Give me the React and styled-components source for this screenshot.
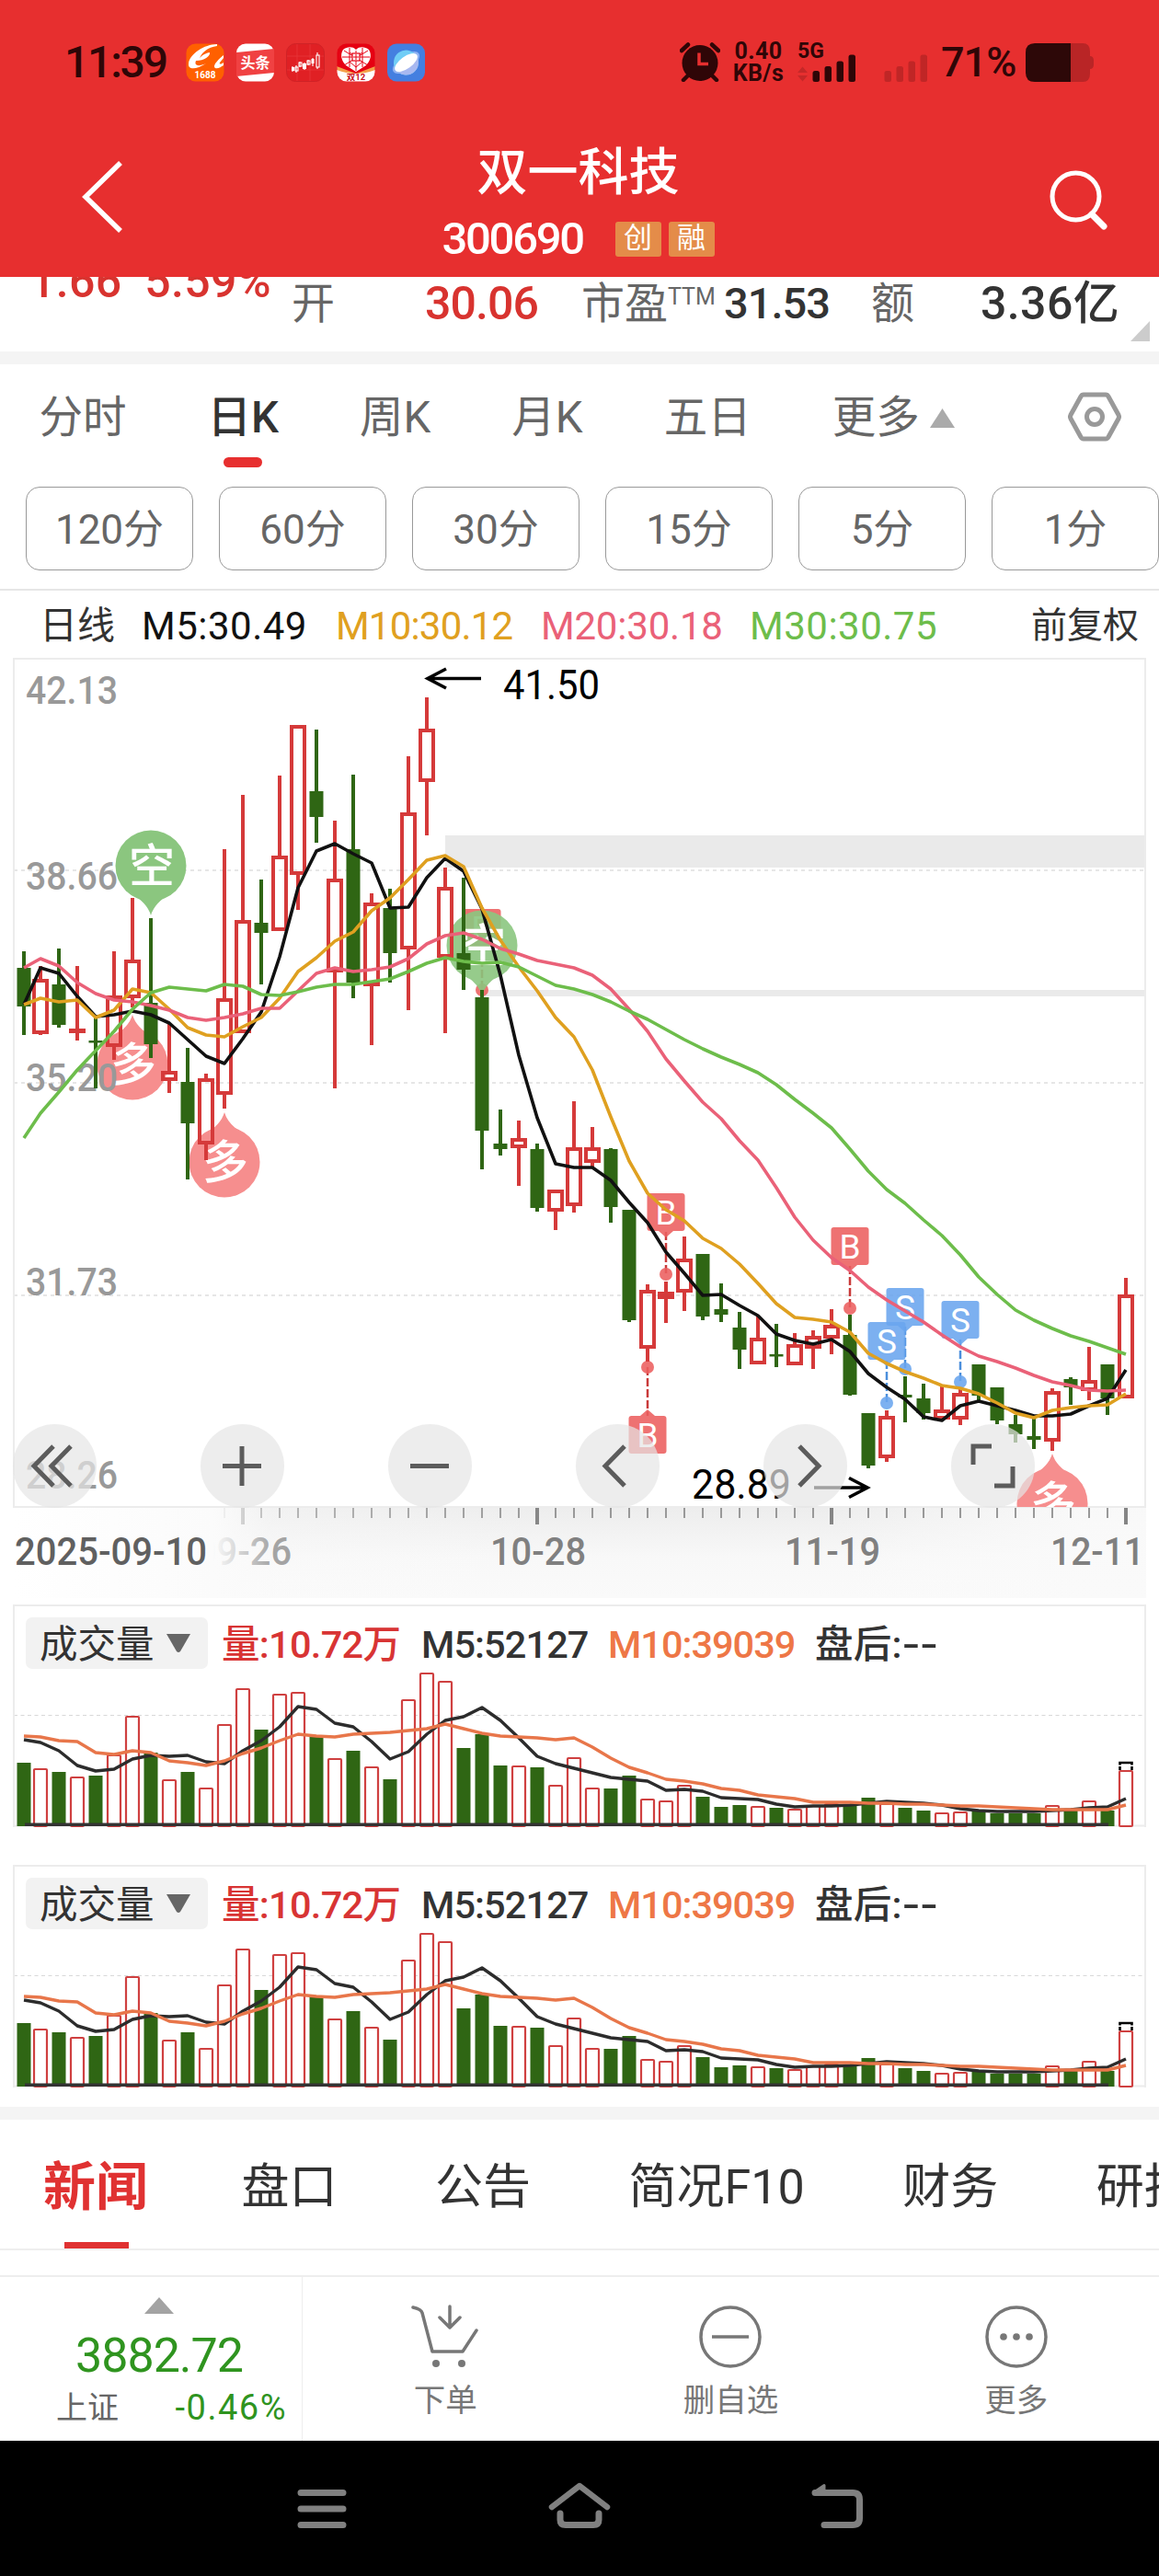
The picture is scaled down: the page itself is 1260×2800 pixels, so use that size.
import React from "react";
import styled, { createGlobalStyle } from "styled-components";

const RED = "#e72f2f";
const UP = "#d53a3a";
const DOWN = "#2f6614";

// [up, high, bodyTop, bodyBottom, low]
const candles = [
  [0, 1034, 1052, 1094, 1125], [1, 1050, 1064, 1124, 1125], [0, 1031, 1070, 1114, 1117],
  [1, 1050, 1118, 1123, 1131], [0, 1105, 1131, 1133, 1183], [1, 1034, 1082, 1138, 1152],
  [1, 976, 1043, 1085, 1095], [0, 998, 1090, 1135, 1150], [1, 1112, 1164, 1175, 1188],
  [0, 1139, 1176, 1221, 1282], [1, 1167, 1172, 1244, 1261], [1, 923, 1085, 1190, 1205],
  [1, 864, 1000, 1123, 1123], [0, 956, 1003, 1014, 1070], [1, 843, 930, 1012, 1012],
  [1, 788, 788, 951, 989], [0, 793, 860, 888, 916], [1, 892, 955, 1057, 1183],
  [0, 842, 923, 1068, 1085], [1, 971, 981, 1072, 1136], [0, 966, 987, 1036, 1068],
  [1, 822, 883, 1032, 1098], [1, 758, 792, 850, 908], [1, 943, 964, 1041, 1123],
  [0, 954, 1036, 1054, 1076], [0, 1076, 1084, 1229, 1271], [0, 1206, 1243, 1249, 1256],
  [1, 1218, 1237, 1248, 1289], [0, 1243, 1249, 1313, 1317], [1, 1293, 1293, 1317, 1337],
  [1, 1197, 1247, 1311, 1318], [1, 1225, 1247, 1264, 1269], [0, 1248, 1249, 1312, 1329],
  [0, 1315, 1315, 1435, 1437], [1, 1396, 1402, 1466, 1480], [1, 1393, 1404, 1412, 1438],
  [1, 1344, 1368, 1405, 1425], [0, 1363, 1363, 1431, 1435], [0, 1395, 1423, 1429, 1437],
  [0, 1426, 1443, 1467, 1488], [1, 1430, 1454, 1483, 1483], [0, 1439, 1472, 1474, 1486],
  [1, 1449, 1461, 1484, 1484], [1, 1446, 1452, 1466, 1488], [1, 1423, 1440, 1455, 1472],
  [0, 1429, 1451, 1516, 1517], [0, 1536, 1536, 1593, 1596], [1, 1533, 1539, 1585, 1589],
  [0, 1496, 1516, 1519, 1546], [0, 1504, 1520, 1536, 1543], [1, 1506, 1532, 1543, 1543],
  [1, 1510, 1514, 1543, 1549], [0, 1483, 1483, 1517, 1523], [0, 1508, 1508, 1544, 1548],
  [0, 1538, 1548, 1559, 1568], [0, 1542, 1561, 1565, 1575], [1, 1509, 1512, 1567, 1577],
  [0, 1497, 1499, 1508, 1527], [1, 1464, 1500, 1512, 1522], [0, 1483, 1483, 1520, 1538],
  [1, 1389, 1407, 1520, 1520],
];

const ma5 = [1092, 1052, 1058, 1083, 1105, 1103, 1099, 1103, 1112, 1130, 1148, 1156, 1129, 1100, 1040, 965, 925, 917, 928, 938, 987, 986, 954, 933, 947, 988, 1060, 1147, 1215, 1265, 1269, 1269, 1283, 1307, 1329, 1361, 1384, 1408, 1407, 1419, 1430, 1450, 1457, 1461, 1456, 1469, 1493, 1508, 1521, 1540, 1544, 1528, 1523, 1528, 1533, 1539, 1539, 1537, 1528, 1520, 1489];
const ma10 = [1092, 1085, 1089, 1087, 1106, 1098, 1075, 1079, 1097, 1117, 1125, 1127, 1116, 1106, 1085, 1056, 1041, 1023, 1013, 990, 976, 956, 935, 930, 942, 987, 1022, 1051, 1077, 1106, 1127, 1163, 1214, 1262, 1297, 1315, 1327, 1346, 1357, 1374, 1395, 1417, 1432, 1434, 1437, 1448, 1471, 1482, 1491, 1498, 1506, 1509, 1515, 1525, 1536, 1541, 1533, 1530, 1528, 1527, 1515];
const ma20 = [1052, 1042, 1050, 1068, 1080, 1087, 1089, 1093, 1098, 1106, 1109, 1106, 1102, 1096, 1096, 1077, 1058, 1052, 1056, 1054, 1051, 1042, 1026, 1017, 1014, 1021, 1031, 1037, 1044, 1048, 1052, 1060, 1075, 1097, 1121, 1151, 1175, 1198, 1216, 1240, 1261, 1291, 1323, 1348, 1367, 1381, 1399, 1413, 1425, 1437, 1451, 1464, 1474, 1480, 1487, 1495, 1502, 1506, 1511, 1512, 1511];
const ma30 = [1237, 1210, 1187, 1163, 1142, 1121, 1097, 1079, 1073, 1075, 1077, 1070, 1072, 1081, 1082, 1078, 1073, 1070, 1070, 1067, 1064, 1056, 1047, 1041, 1045, 1047, 1046, 1051, 1061, 1071, 1075, 1081, 1089, 1099, 1108, 1119, 1130, 1140, 1149, 1157, 1166, 1179, 1195, 1210, 1226, 1249, 1273, 1293, 1308, 1326, 1343, 1364, 1388, 1407, 1424, 1435, 1444, 1452, 1458, 1465, 1472];

const volumes = [1916, 1922, 1926, 1931, 1930, 1907, 1865, 1905, 1934, 1926, 1943, 1874, 1835, 1880, 1841, 1839, 1888, 1911, 1903, 1920, 1934, 1847, 1818, 1827, 1900, 1885, 1919, 1919, 1921, 1940, 1910, 1943, 1944, 1930, 1955, 1957, 1940, 1953, 1964, 1962, 1963, 1965, 1966, 1962, 1960, 1963, 1954, 1960, 1965, 1968, 1970, 1969, 1969, 1971, 1971, 1971, 1962, 1968, 1957, 1968, 1924];
const vma5 = [1891, 1894, 1903, 1919, 1925, 1923, 1912, 1908, 1909, 1908, 1915, 1917, 1903, 1892, 1877, 1855, 1858, 1873, 1877, 1893, 1912, 1904, 1885, 1870, 1866, 1856, 1870, 1889, 1909, 1917, 1922, 1927, 1932, 1934, 1936, 1946, 1945, 1947, 1954, 1955, 1956, 1961, 1964, 1963, 1963, 1962, 1960, 1958, 1959, 1960, 1962, 1966, 1968, 1969, 1969, 1969, 1968, 1967, 1965, 1964, 1955];
const vma10 = [1887, 1888, 1892, 1893, 1905, 1907, 1903, 1905, 1914, 1916, 1919, 1914, 1906, 1900, 1892, 1885, 1887, 1888, 1885, 1884, 1883, 1881, 1879, 1874, 1879, 1884, 1887, 1888, 1889, 1891, 1889, 1899, 1911, 1921, 1927, 1934, 1936, 1939, 1944, 1946, 1951, 1953, 1955, 1959, 1959, 1959, 1960, 1960, 1961, 1961, 1962, 1963, 1963, 1964, 1965, 1966, 1967, 1967, 1967, 1967, 1962];

const cx = (i) => (i === 0 ? 26 : 24 + 20 * i);
const toPoints = (list) => list.map((y, i) => `${cx(i)},${y}`).join(" ");

const markers = [
  { t: "B", x: 524, box: 988, dot: 1076 },
  { t: "B", x: 724, box: 1297, dot: 1385 },
  { t: "B", x: 924, box: 1334, dot: 1422 },
  { t: "B", x: 704, box: 1539, dot: 1486 },
  { t: "S", x: 984, box: 1400, dot: 1488 },
  { t: "S", x: 964, box: 1437, dot: 1525 },
  { t: "S", x: 1044, box: 1414, dot: 1502 },
];

const pins = [
  { t: "多", x: 144, y: 1157, up: true },
  { t: "多", x: 244, y: 1263, up: true },
  { t: "多", x: 1144, y: 1634, up: true },
  { t: "空", x: 164, y: 941 },
  { t: "空", x: 524, y: 1028 },
];

const controls = [
  "M44 24L23 45.500L44 67M63 24L42 45.500L63 67",
  "M24 45.500H66M45 24V67",
  "M24 45.500H66",
  "M53 24L32 45.500L53 67",
  "M39 24L60 45.500L39 67",
  "M24 44V24H44M67 46V67H47",
];

const Marker = ({ t, x, box, dot }) => {
  const fill = t === "B" ? "#ec5f5f" : "#6aa6ef";
  const line = t === "B" ? "#c93a3a" : "#4b8fdc";
  const below = dot < box;
  const start = below ? dot : box + 42;
  const end = below ? box : dot;
  const tip = below
    ? `${x - 8},${box} ${x + 8},${box} ${x},${box - 7}`
    : `${x - 8},${box + 41} ${x + 8},${box + 41} ${x},${box + 48}`;
  return (
    <g>
      <line x1={x} x2={x} y1={start} y2={end} stroke={line} strokeWidth="2.500" strokeDasharray="9 3" />
      <g fill={fill} opacity="0.88">
        <circle cx={x} cy={dot} r="7" />
        <rect x={x - 20.5} y={box} width="41" height="41" rx="3" />
        <polygon points={tip} />
      </g>
      <ChartText x={x} y={box + 34} fill="#fff" size="37" anchor="middle">{t}</ChartText>
    </g>
  );
};

const Pin = ({ t, x, y, up }) => {
  const s = up ? -1 : 1;
  return (
    <g>
      <g fill={up ? "#f68e8e" : "#8bc67f"} opacity={x === 524 ? 0.9 : 1}>
        <circle cx={x} cy={y} r="38.5" />
        <path d={`M${x - 22} ${y + s * 30} Q${x - 4} ${y + s * 40} ${x} ${y + s * 54} Q${x + 4} ${y + s * 40} ${x + 22} ${y + s * 30} Z`} />
      </g>
      <ChartText x={x + 1} y={y + 18} fill="#fff" size="50" weight="500" anchor="middle">{t}</ChartText>
    </g>
  );
};

const Candle = ({ i, d }) => {
  const [up, high, top, bottom, low] = d;
  const x = cx(i);
  if (!up) {
    return (
      <g fill={DOWN}>
        <rect x={x - 2} y={high} width="4" height={low - high} />
        <rect x={x - 7.5} y={top} width="15" height={Math.max(bottom - top, 2.5)} />
      </g>
    );
  }
  return (
    <g>
      <rect x={x - 2} y={high} width="4" height={Math.max(top - high, 0)} fill={UP} />
      <rect x={x - 2} y={bottom} width="4" height={low - bottom} fill={UP} />
      <rect x={x - 7} y={top + 2} width="14" height={Math.max(bottom - top - 4, 1)} fill="none" stroke={UP} strokeWidth="4" />
    </g>
  );
};

const PriceChart = () => (
  <svg width="1260" height="924" viewBox="0 715 1260 924">
    <defs>
      <clipPath id="plot"><rect x="14" y="715" width="1232" height="923" /></clipPath>
    </defs>
    {[946, 1177, 1408].map((y) => (
      <line key={y} x1="15" x2="1245" y1={y} y2={y} stroke="#e6e6e6" strokeWidth="2" strokeDasharray="4 4" />
    ))}
    <rect x="484" y="908" width="762" height="35" fill="#eaeaea" />
    <rect x="524" y="1076" width="722" height="7" fill="#eaeaea" />
    <rect x="15" y="716" width="1230" height="922" fill="none" stroke="#ececec" strokeWidth="2" />
    <g clipPath="url(#plot)">
      {markers.map((m) => <Marker key={m.x} {...m} />)}
      {pins.map((p) => <Pin key={p.x} {...p} />)}
      {[["42.13", 765], ["38.66", 967], ["35.20", 1186], ["31.73", 1408], ["28.26", 1618]].map(([t, y]) => (
        <ChartText key={t} x="28" y={y} fill="#999" size="42" weight="500" textLength="100">{t}</ChartText>
      ))}
      {candles.map((d, i) => <Candle key={i} i={i} d={d} />)}
      <g fill="none" strokeWidth="3.600" strokeLinejoin="round">
        <polyline points={toPoints(ma5)} stroke="#111" />
        <polyline points={toPoints(ma10)} stroke="#dfa020" />
        <polyline points={toPoints(ma20)} stroke="#ea6178" />
        <polyline points={toPoints(ma30)} stroke="#6dbd4b" />
      </g>
    </g>
    <g fill="none" stroke="#000" strokeWidth="3.600">
      <path d="M523 737.500H465M485 727L465 737.500L485 748" />
      <path d="M885 1617H943M923 1606.500L943 1617L923 1627.500" />
    </g>
    <ChartText x="547" y="760" fill="#000" size="44" textLength="105">41.50</ChartText>
    <ChartText x="752" y="1629" fill="#000" size="44" textLength="108">28.89</ChartText>
  </svg>
);

const DateAxis = () => {
  const ticks = candles.map((_, i) => i).slice(11);
  return (
    <svg width="1260" height="98" viewBox="0 1639 1260 98">
      <defs>
        <linearGradient id="shade" x1="0" x2="0" y1="0" y2="1">
          <stop offset="0" stopColor="#ededed" />
          <stop offset="0.55" stopColor="#f8f8f8" />
          <stop offset="1" stopColor="#fafafa" />
        </linearGradient>
        <linearGradient id="fade" gradientUnits="userSpaceOnUse" x1="15" x2="600" y1="0" y2="0">
          <stop offset="0" stopColor="#fff" />
          <stop offset="0.37" stopColor="#fbfbfb" />
          <stop offset="0.48" stopColor="#fbfbfb" stopOpacity="0.3" />
          <stop offset="1" stopColor="#fbfbfb" stopOpacity="0" />
        </linearGradient>
        <linearGradient id="fadeRight" gradientUnits="userSpaceOnUse" x1="900" x2="1246" y1="0" y2="0">
          <stop offset="0" stopColor="#fbfbfb" stopOpacity="0" />
          <stop offset="0.8" stopColor="#fafafa" stopOpacity="0.9" />
        </linearGradient>
      </defs>
      <rect x="15" y="1639" width="1231" height="98" fill="url(#shade)" />
      <rect x="900" y="1639" width="346" height="98" fill="url(#fadeRight)" />
      {ticks.map((i) => {
        const major = (i - 12) % 16 === 0;
        return <rect key={i} x={cx(i) - (major ? 2 : 1)} y="1639" width={major ? 4 : 2} height={major ? 18 : 11} fill={major ? "#858585" : "#999"} />;
      })}
      <ChartText x="213" y="1701" fill="#808080" size="42" weight="500" textLength="104">09-26</ChartText>
      <rect x="15" y="1639" width="585" height="98" fill="url(#fade)" />
      <ChartText x="16" y="1701" fill="#606060" size="42" weight="500" textLength="209">2025-09-10</ChartText>
      <ChartText x="533" y="1701" fill="#808080" size="42" weight="500" textLength="104">10-28</ChartText>
      <ChartText x="853" y="1701" fill="#808080" size="42" weight="500" textLength="104">11-19</ChartText>
      <ChartText x="1142" y="1701" fill="#808080" size="42" weight="500" textLength="102">12-11</ChartText>
    </svg>
  );
};

const VolumeChart = () => (
  <svg width="1260" height="171" viewBox="0 1816 1260 171">
    <line x1="15" x2="1245" y1="1864.500" y2="1864.500" stroke="#d8d8d8" strokeWidth="1.200" strokeDasharray="4 3.500" />
    <line x1="15" x2="1245" y1="1984.500" y2="1984.500" stroke="#ececec" strokeWidth="2" />
    {volumes.map((y, i) =>
      candles[i][0] ? (
        <rect key={i} x={cx(i) - 7} y={y + 1} width="14" height={1984 - y} rx="1" fill="#fff" stroke="#cf4040" strokeWidth="2.200" />
      ) : (
        <rect key={i} x={cx(i) - 7.5} y={y} width="15" height={1985 - y} fill={DOWN} />
      )
    )}
    <path d="M1217.500 1924V1916H1230.500V1924" fill="none" stroke="#000" strokeWidth="2.600" strokeDasharray="4 1.500 18 1.500" />
    <rect x="27" y="1981.500" width="1178" height="3.500" fill="#333" />
    <g fill="none" strokeWidth="3.400" strokeLinejoin="round">
      <polyline points={toPoints(vma5)} stroke="#2c2c2c" />
      <polyline points={toPoints(vma10)} stroke="#e8764a" />
    </g>
  </svg>
);

const VolumePanel = () => (
  <VolumeWrap>
    <VolumeHead>
      <Picker>
        <span>成交量</span>
        <svg width="28" height="21" viewBox="0 0 28 21"><path d="M1 0H27L16 19Q14 21 12 19Z" fill="#666" /></svg>
      </Picker>
      <VolumeItem color="#d83434" w={217} track={-0.7}>量:10.72万</VolumeItem>
      <VolumeItem color="#333" w={203} track={-0.9}>M5:52127</VolumeItem>
      <VolumeItem color="#ee7746" w={225} track={-1}>M10:39039</VolumeItem>
      <VolumeItem color="#333" w={140} track={0.3}>盘后:<Dashes>--</Dashes></VolumeItem>
    </VolumeHead>
    <VolumeChart />
  </VolumeWrap>
);

const AppIcons = () => (
  <svg width="262" height="42" viewBox="0 0 262 42">
    <rect x="0.500" y="0.500" width="41" height="41" rx="10" fill="#ff6000" />
    <path d="M34 1C20 1 4 12 3 22C2 29 11 29 22 22C13 26 9 24 11 19C20 19 27 14 26 10C24 10 16 13 15 17C16 11 24 4 34 3ZM41 13C36 17 30 23 31 26C33 29 38 26 41 24V21C38 23 36 23 37 21L41 16Z" fill="#fff" />
    <IconText x="21" y="38" fill="#fff" fontSize="10">1688</IconText>
    <rect x="55" y="0.500" width="41" height="41" rx="10" fill="#fff" />
    <path d="M55 10L96 6V32L55 36Z" fill="#f04142" />
    <IconText x="75.500" y="27" fill="#fff" fontSize="16">头条</IconText>
    <rect x="109.500" y="0.500" width="41" height="41" rx="10" fill="#e02024" stroke="#cf2226" />
    <path d="M121 1V41M135 1V41M110 14H150M110 29H150" stroke="#e83a3c" strokeWidth="0.700" />
    <g fill="none" stroke="#fff" strokeWidth="1.100">
      <path d="M116 25V31M120 24V32M124 20V26M129 21V29M133 18V24M138 16V25M143 10V28" />
      <rect x="119" y="26" width="3" height="4" /><rect x="123" y="21" width="3" height="4" />
      <rect x="132" y="19" width="3" height="4" /><rect x="142" y="13" width="3" height="13" fill="#e02024" />
    </g>
    <path d="M115 26H118V30H115ZM127 22H131V28H127ZM136.500 17H139.500V22H136.500Z" fill="#fff" />
    <clipPath id="heart"><rect x="164.500" y="0.500" width="41" height="41" rx="10" /></clipPath>
    <g clipPath="url(#heart)">
      <rect x="164" y="0" width="42" height="42" fill="#e60012" />
      <path d="M164 25L185 33L206 25V30L185 38L164 30Z" fill="#f4a04a" />
      <path d="M164 29Q185 37 206 29V42H164Z" fill="#fff" />
      <path d="M185 7C189 3 195 4 199 7C203 13 200 20 196 24L185 31L174 24C170 20 167 13 171 7C175 4 181 3 185 7Z" fill="#fff" />
      <path d="M172 8L198 24M198 8L172 24M170 15H200M178 5V26M192 5V26M185 8V14M185 19V30M178 20L185 26L192 20M178 10L185 15L192 10" stroke="#e60012" strokeWidth="1" fill="none" />
      <rect x="181" y="11" width="8" height="8" fill="#fff" stroke="#e60012" strokeWidth="1.200" />
      <path d="M185 12V18M182 15H188" stroke="#e60012" />
      <IconText x="185" y="40" fill="#c8101c" fontSize="9.500">双12</IconText>
    </g>
    <rect x="219" y="0.500" width="41" height="41" rx="10" fill="#447fe0" />
    <g transform="rotate(-36 239.500 21)">
      <ellipse cx="239.500" cy="21" rx="17" ry="8" fill="#8fb2f2" />
      <circle cx="239.500" cy="21" r="13.500" fill="#70cdf6" />
      <path d="M226 21A13.500 13.500 0 0 0 253 21Z" fill="#a8b8f0" />
      <ellipse cx="239.500" cy="21" rx="14.500" ry="6.500" fill="#fff" />
    </g>
  </svg>
);

const Alarm = () => (
  <svg width="44" height="43" viewBox="0 0 44 43">
    <circle cx="22" cy="22.500" r="19.500" fill="#2f0607" />
    <path d="M2 9L9 2.500M42 9L35 2.500M9 36L4 41M35 36L40 41" stroke="#2f0607" strokeWidth="4.500" strokeLinecap="round" />
    <path d="M21 11.500V23.500H31" fill="none" stroke={RED} strokeWidth="3.500" />
  </svg>
);

const Signal = ({ faint }) => (
  <svg width="64" height="42" viewBox="0 0 64 42">
    {!faint && <path d="M0 32L5.500 25.500L11 32ZM0 35L5.500 41.500L11 35Z" fill="#c52828" />}
    <g fill={faint ? "#c02626" : "#2f0607"}>
      <rect x="16.500" y="30" width="7.500" height="12" rx="2.500" />
      <rect x="29.500" y="25" width="7.500" height="17" rx="2.500" />
      <rect x="42.500" y="19.500" width="7.500" height="22.500" rx="2.500" />
      <rect x="55.500" y="12.500" width="7.500" height="29.500" rx="2.500" />
    </g>
  </svg>
);

const Battery = () => (
  <svg width="75" height="42" viewBox="0 0 75 42">
    <path d="M49 0H62Q70 0 70 9V14Q74 14 74 19V23Q74 28 70 28V33Q70 42 62 42H49Z" fill="#b92526" />
    <path d="M49 0H10Q0 0 0 10V32Q0 42 10 42H49Z" fill="#2d0808" />
  </svg>
);

function App() {
  return (
    <Screen>
      <GlobalStyle />
      <Header>
        <StatusBar>
          <Clock>11:39</Clock>
          <AppIcons />
          <StatusRight>
            <Alarm />
            <Speed><span>0.40</span><span>KB/s</span></Speed>
            <SignalWrap><NetType>5G</NetType><Signal /></SignalWrap>
            <SignalWrap><Signal faint /></SignalWrap>
            <Percent>71%</Percent>
            <Battery />
          </StatusRight>
        </StatusBar>
        <TitleBar>
          <svg width="48" height="80" viewBox="0 0 48 80"><path d="M43 3L5 40L43 77" fill="none" stroke="#fff" strokeWidth="5.500" /></svg>
          <TitleBlock>
            <StockName>双一科技</StockName>
            <CodeRow>
              <Code>300690</Code>
              <Tag>创</Tag>
              <Tag>融</Tag>
            </CodeRow>
          </TitleBlock>
          <svg width="64" height="74" viewBox="0 0 64 74">
            <circle cx="28.500" cy="36.500" r="25.500" fill="none" stroke="#fff" strokeWidth="5" />
            <path d="M46 56L59 69" stroke="#fff" strokeWidth="7" strokeLinecap="round" />
          </svg>
        </TitleBar>
      </Header>

      <QuoteRow>
        <Change><span>1.66</span><span>5.59%</span></Change>
        <Label w={145}>开</Label>
        <Value w={170} color="#d8332f" size={50} track={-0.9}>30.06</Value>
        <Label w={155}>市盈<sup>TTM</sup></Label>
        <Value w={160} color="#333" size={47} track={-1}>31.53</Value>
        <Label w={119}>额</Label>
        <Value color="#333" size={50} track={0.4}>3.36亿</Value>
        <Corner width="21" height="22" viewBox="0 0 21 22"><path d="M21 0V22H0Z" fill="#ccc" /></Corner>
      </QuoteRow>
      <Strip />

      <PeriodTabs>
        <Period>分时</Period>
        <Period $active>日K</Period>
        <Period>周K</Period>
        <Period>月K</Period>
        <Period>五日</Period>
        <Period>
          更多
          <svg width="27" height="21" viewBox="0 0 27 21"><path d="M13.500 0L27 21H0Z" fill="#aaa" /></svg>
        </Period>
        <Gear width="58" height="54" viewBox="0 0 58 54">
          <path d="M17 3H41Q43 3 44 5L55 25Q56 27 55 29L44 49Q43 51 41 51H17Q15 51 14 49L3 29Q2 27 3 25L14 5Q15 3 17 3Z" fill="none" stroke="#999" strokeWidth="5" />
          <circle cx="29" cy="27" r="8.500" fill="none" stroke="#999" strokeWidth="5" />
        </Gear>
      </PeriodTabs>
      <MinuteRow>
        {["120分", "60分", "30分", "15分", "5分", "1分"].map((t) => <Minute key={t}>{t}</Minute>)}
      </MinuteRow>

      <Legend>
        <LegendItem color="#333" size={41}>日线</LegendItem>
        <LegendItem color="#111" track={0.5}>M5:30.49</LegendItem>
        <LegendItem color="#e0a020" track={-0.8}>M10:30.12</LegendItem>
        <LegendItem color="#ea6178" track={-0.2}>M20:30.18</LegendItem>
        <LegendItem color="#6dbd4b" track={0.5}>M30:30.75</LegendItem>
        <LegendItem color="#333" size={39}>前复权</LegendItem>
      </Legend>

      <ChartArea>
        <PriceChart />
        <DateAxis />
        <Controls>
          {controls.map((d) => (
            <Control key={d}>
              <svg width="91" height="91" viewBox="0 0 91 91"><path d={d} fill="none" stroke="#5c5c5c" strokeWidth="5" /></svg>
            </Control>
          ))}
        </Controls>
      </ChartArea>

      <VolumePanel />
      <VolumePanel />
      <Strip $top={21} />

      <NewsTabs>
        <NewsTab $active>新闻</NewsTab>
        <NewsTab>盘口</NewsTab>
        <NewsTab>公告</NewsTab>
        <NewsTab>简况F10</NewsTab>
        <NewsTab>财务</NewsTab>
        <NewsTab>研报</NewsTab>
      </NewsTabs>

      <BottomBar>
        <IndexBox>
          <svg width="32" height="18" viewBox="0 0 32 18"><path d="M16 0L32 18H0Z" fill="#a3a3a3" /></svg>
          <IndexValue>3882.72</IndexValue>
          <IndexRow><span>上证</span><IndexRate>-0.46%</IndexRate></IndexRow>
        </IndexBox>
        <Action>
          <svg width="76" height="70" viewBox="0 0 76 70" fill="none" stroke="#777" strokeWidth="3.500" strokeLinecap="round" strokeLinejoin="round">
            <path d="M3 3Q12 5 13 9L24 51H57L72 28M43 2V24M32 14L43 25L54 14" />
            <circle cx="28" cy="64" r="4" fill="#777" stroke="none" /><circle cx="56" cy="64" r="4" fill="#777" stroke="none" />
          </svg>
          下单
        </Action>
        <Action>
          <svg width="70" height="70" viewBox="0 0 70 70" fill="none" stroke="#777" strokeWidth="3.500">
            <circle cx="35" cy="35" r="32" /><path d="M15 35H55" />
          </svg>
          删自选
        </Action>
        <Action>
          <svg width="70" height="70" viewBox="0 0 70 70">
            <circle cx="35" cy="35" r="32" fill="none" stroke="#777" strokeWidth="3.500" />
            <g fill="#777"><circle cx="21" cy="35" r="3.800" /><circle cx="35" cy="35" r="3.800" /><circle cx="49" cy="35" r="3.800" /></g>
          </svg>
          更多
        </Action>
      </BottomBar>

      <NavBar>
        <svg width="70" height="54" viewBox="0 0 70 54"><path d="M12 13.500H58M12 31H58M12 48.500H58" stroke="#808080" strokeWidth="7" strokeLinecap="round" /></svg>
        <svg width="70" height="54" viewBox="0 0 70 54" fill="none" stroke="#808080" strokeWidth="7" strokeLinecap="round" strokeLinejoin="round">
          <path d="M5 29L35 6L65 29" strokeWidth="6.500" /><path d="M14 36V43Q14 48.500 20 48.500H50Q56 48.500 56 43V36" />
        </svg>
        <svg width="70" height="54" viewBox="0 0 70 54" fill="none" stroke="#808080" strokeWidth="7" strokeLinecap="round" strokeLinejoin="round">
          <path d="M11 13.500H52Q59.500 13.500 59.500 21V41Q59.500 48.500 52 48.500H21" /><path d="M10 13L21 5.500V13Z" fill="#808080" strokeWidth="3" />
        </svg>
      </NavBar>
    </Screen>
  );
}

const GlobalStyle = createGlobalStyle`
  * { box-sizing: border-box; }
  body {
    margin: 0;
    background: #fff;
    font-family: Roboto, "Noto Sans CJK SC", sans-serif;
  }
  svg { display: block; flex: none; }
`;

const ChartText = styled.text.attrs((p) => ({ fontSize: p.size, fontWeight: p.weight || 400, textAnchor: p.anchor, lengthAdjust: "spacingAndGlyphs" }))`
  font-family: Roboto, "Noto Sans CJK SC", sans-serif;
`;

const IconText = styled.text`
  font-family: Roboto, "Noto Sans CJK SC", sans-serif;
  font-weight: 700;
  text-anchor: middle;
`;

const Screen = styled.main`
  width: 1260px;
  height: 2800px;
  overflow: hidden;
  display: flex;
  flex-direction: column;
  line-height: 1;
  white-space: nowrap;
`;

const Header = styled.header`
  height: 301px;
  flex: none;
  background: ${RED};
`;

const StatusBar = styled.div`
  height: 135px;
  padding: 0 70px 0 70px;
  display: flex;
  align-items: center;
  color: #2f0607;
`;

const Clock = styled.div`
  width: 132px;
  font: 500 48px/1 Roboto, sans-serif;
  letter-spacing: -2.2px;
`;

const StatusRight = styled.div`
  margin-left: auto;
  display: flex;
  align-items: center;
`;

const Speed = styled.div`
  width: 84px;
  display: flex;
  flex-direction: column;
  align-items: center;
  padding-right: 1px;
  font: 700 25px/24px Roboto, sans-serif;
  letter-spacing: 0.4px;
`;

const SignalWrap = styled.div`
  position: relative;
  margin-right: 14px;
`;

const NetType = styled.span`
  position: absolute;
  left: 0;
  top: -3px;
  font: 700 23px/23px Roboto, sans-serif;
`;

const Percent = styled.div`
  font: 500 45px/1 Roboto, sans-serif;
  width: 92px;
  letter-spacing: -1px;
`;

const TitleBar = styled.div`
  height: 166px;
  padding: 0 55px 0 88px;
  display: flex;
  justify-content: space-between;
  align-items: center;
  & > svg { margin-bottom: 8px; }
`;

const TitleBlock = styled.div`
  width: 300px;
  padding-top: 5px;
  display: flex;
  flex-direction: column;
  align-items: center;
  color: #fff;
  margin-right: 20px;
`;

const StockName = styled.div`
  font-size: 55px;
  font-weight: 500;
  line-height: 60px;
  height: 78px;
`;

const CodeRow = styled.div`
  display: flex;
  align-items: center;
  gap: 8px;
`;

const Code = styled.div`
  font-size: 49px;
  font-weight: 500;
  letter-spacing: -2.3px;
  width: 180px;
`;

const Tag = styled.div`
  width: 50px;
  height: 38px;
  border-radius: 3px;
  background: #e48c49;
  font-size: 31px;
  line-height: 36px;
  text-align: center;
`;

const QuoteRow = styled.section`
  height: 81px;
  flex: none;
  position: relative;
  display: flex;
  align-items: center;
  padding: 0 0 24px 32px;
  overflow: hidden;
`;

const Change = styled.div`
  width: 285px;
  display: flex;
  gap: 25px;
  color: #d8332f;
  font: 500 50px/1 Roboto, sans-serif;
  letter-spacing: 0.3px;
  margin-top: -47px;
`;

const Label = styled.div`
  width: ${(p) => p.w}px;
  color: #666;
  font-size: 47px;
  sup {
    font-size: 25px;
    line-height: 0;
    vertical-align: 15px;
  }
`;

const Value = styled.div`
  width: ${(p) => (p.w ? p.w + "px" : "auto")};
  color: ${(p) => p.color};
  font-size: ${(p) => p.size}px;
  font-weight: 500;
  letter-spacing: ${(p) => p.track || 0}px;
`;

const Corner = styled.svg`
  position: absolute;
  right: 10px;
  bottom: 11px;
`;

const Strip = styled.div`
  height: 14px;
  flex: none;
  margin-top: ${(p) => p.$top || 0}px;
  background: #f4f4f4;
`;

const PeriodTabs = styled.nav`
  height: 133px;
  flex: none;
  padding: 0 41px 16px 42.5px;
  display: flex;
  align-items: center;
  gap: 88px;
`;

const Period = styled.div`
  position: relative;
  display: flex;
  align-items: center;
  gap: 11px;
  font-size: 47.5px;
  font-weight: ${(p) => (p.$active ? 500 : 400)};
  color: ${(p) => (p.$active ? "#333" : "#666")};
  &::after {
    content: "";
    display: ${(p) => (p.$active ? "block" : "none")};
    position: absolute;
    left: 17px;
    top: 66px;
    width: 42px;
    height: 11px;
    border-radius: 6px;
    background: ${RED};
  }
`;

const Gear = styled.svg`
  margin: 0 0 4px auto;
`;

const MinuteRow = styled.div`
  height: 113px;
  flex: none;
  padding-left: 28px;
  border-bottom: 2px solid #e6e6e6;
  display: flex;
  gap: 28px;
`;

const Minute = styled.div`
  width: 182px;
  height: 91px;
  flex: none;
  border: 1.5px solid #999;
  border-radius: 15px;
  padding-top: 3px;
  color: #666;
  font-size: 44px;
  display: flex;
  align-items: center;
  justify-content: center;
`;

const Legend = styled.div`
  height: 73px;
  flex: none;
  padding-left: 43px;
  display: grid;
  grid-template-columns: 111px 211px 223px 227px 306px auto;
  align-items: center;
  padding-top: 4px;
`;

const LegendItem = styled.div`
  color: ${(p) => p.color};
  font-size: ${(p) => p.size || 42}px;
  letter-spacing: ${(p) => p.track || 0}px;
`;

const ChartArea = styled.section`
  position: relative;
  height: 1022px;
  flex: none;
`;

const Controls = styled.div`
  position: absolute;
  left: 14px;
  top: 833px;
  display: flex;
  gap: 113px;
`;

const Control = styled.div`
  width: 91px;
  height: 91px;
  border-radius: 50%;
  background: rgba(229, 229, 229, 0.7);
`;

const VolumeWrap = styled.section`
  height: 242px;
  flex: none;
  margin-top: 7px;
  position: relative;
  & + & { margin-top: 41px; }
  &::before {
    content: "";
    position: absolute;
    inset: 0 14px 0 14px;
    border: 2px solid #ececec;
    border-bottom: 0;
  }
`;

const VolumeHead = styled.div`
  height: 72px;
  padding: 14px 0 2px 28px;
  display: flex;
  align-items: center;
`;

const Picker = styled.div`
  width: 198px;
  height: 56px;
  border-radius: 7px;
  background: #f2f2f2;
  padding: 0 18px 0 15px;
  margin-right: 15px;
  display: flex;
  align-items: center;
  justify-content: space-between;
  font-size: 41.5px;
  color: #333;
  span { padding-top: 3px; }
`;

const VolumeItem = styled.div`
  width: ${(p) => p.w}px;
  padding-top: 3px;
  color: ${(p) => p.color};
  font-size: 41.5px;
  font-weight: 500;
  letter-spacing: ${(p) => p.track || 0}px;
`;

const Dashes = styled.span`
  display: inline-block;
  transform: scaleX(1.35);
  transform-origin: left;
`;

const NewsTabs = styled.nav`
  height: 142px;
  flex: none;
  padding-left: 47px;
  border-bottom: 2px solid #eee;
  display: flex;
  align-items: center;
  gap: 106.5px;
`;

const NewsTab = styled.div`
  position: relative;
  height: 100%;
  flex: none;
  display: flex;
  align-items: center;
  padding-top: 7px;
  font-size: ${(p) => (p.$active ? 57 : 52)}px;
  font-weight: ${(p) => (p.$active ? 700 : 400)};
  color: ${(p) => (p.$active ? "#e03232" : "#333")};
  margin-right: ${(p) => (p.$active ? -5 : 0)}px;
  &::after {
    content: "";
    display: ${(p) => (p.$active ? "block" : "none")};
    position: absolute;
    left: 23px;
    bottom: 0;
    width: 70px;
    height: 7px;
    background: #e03232;
  }
`;

const BottomBar = styled.footer`
  height: 180px;
  flex: none;
  margin-top: 27px;
  border-top: 2px solid #eee;
  display: flex;
`;

const IndexBox = styled.div`
  width: 329px;
  border-right: 1px solid #eee;
  display: flex;
  flex-direction: column;
  align-items: center;
  padding: 22px 0 0 18px;
`;

const IndexValue = styled.div`
  color: #2f941f;
  font-size: 52px;
  letter-spacing: -1px;
  margin-top: 20px;
`;

const IndexRow = styled.div`
  width: 251px;
  margin-top: 11px;
  margin-left: 43px;
  align-self: flex-start;
  display: flex;
  justify-content: space-between;
  align-items: center;
  color: #666;
  font-size: 34px;
`;

const IndexRate = styled.span`
  color: #2f941f;
  font-size: 38px;
  letter-spacing: 1.5px;
`;

const Action = styled.div`
  flex: 1;
  display: flex;
  flex-direction: column;
  align-items: center;
  padding-top: 30px;
  gap: 17px;
  color: #777;
  font-size: 34.5px;
`;

const NavBar = styled.div`
  height: 147px;
  flex: none;
  background: #000;
  display: flex;
  align-items: flex-start;
  justify-content: center;
  gap: 210px;
  padding-top: 43px;
`;

export default App;
